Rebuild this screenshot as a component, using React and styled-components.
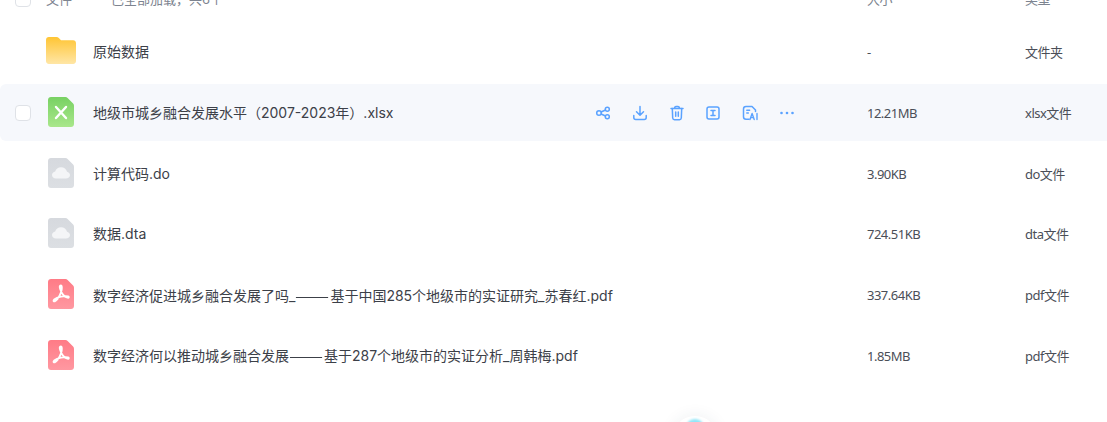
import React from 'react';
import styled, { createGlobalStyle } from 'styled-components';

const GlobalStyle = createGlobalStyle`
  html, body {
    margin: 0;
    padding: 0;
    height: 100%;
    overflow: hidden;
    background: #fff;
  }
  body {
    font-family: Inter, "Noto Sans CJK SC", sans-serif;
    color: #3c4048;
  }
`;

const Page = styled.div`
  position: relative;
  height: 422px;
  overflow: hidden;
`;

const List = styled.div`
  display: flex;
  flex-direction: column;
  gap: 3.8px;
  margin-top: -17.4px;
`;

const Row = styled.div`
  display: grid;
  grid-template-columns: 31px 47px 1fr 158px 82px;
  align-items: center;
  height: 57px;
  padding-left: 15px;
  background: ${(p) => (p.$active ? '#f6f8fc' : 'transparent')};
  border-radius: 6px 0 0 6px;
`;

const HeaderRow = styled(Row)`
  height: 32px;
  margin-bottom: 5px;
  font-size: 13px;
  color: #7d8490;
`;

const Check = styled.span`
  display: block;
  width: 16px;
  height: 16px;
  box-sizing: border-box;
  background: #fff;
  border: 1.5px solid #dfe2e7;
  border-radius: 4px;
`;

const IconCell = styled.div`
  display: flex;
  align-items: center;
  margin-left: ${(p) => p.$offset}px;
  margin-bottom: 2px;
`;

const NameCell = styled.div`
  display: flex;
  align-items: center;
  min-width: 0;
  font-size: 14px;
  line-height: 20px;
`;

const Name = styled.span`
  flex: 1;
  white-space: nowrap;
`;

const Dash = styled.span`
  display: inline-block;
  width: 35px;
  font-family: "Noto Sans CJK SC", sans-serif;
  transform: scaleX(1.45);
  transform-origin: left center;
`;

const HeaderTitle = styled.div`
  display: flex;
  align-items: center;
  grid-column: 2 / 4;
`;

const SortMark = styled.span`
  width: 4px;
  height: 1px;
  margin: 0 24px 0 11px;
  background: #b9bdc5;
`;

const Actions = styled.div`
  display: flex;
  align-items: center;
  gap: 18.8px;
  margin-right: 71px;
  color: #5aa2ff;
`;

const Meta = styled.div`
  font-family: "Noto Sans", "Noto Sans CJK SC", sans-serif;
  font-size: 13px;
  line-height: 20px;
  letter-spacing: -0.5px;
  white-space: nowrap;
  color: ${(p) => (p.$muted ? '#7d8490' : '#4a4e57')};
`;

const FloatButton = styled.div`
  position: absolute;
  left: 672px;
  top: 416px;
  width: 46px;
  height: 46px;
  border-radius: 50%;
  background: #fff;
  box-shadow: 0 0 16px rgba(40, 60, 90, 0.08);

  &::after {
    content: '';
    position: absolute;
    left: 15px;
    top: 3px;
    width: 16px;
    height: 12px;
    border-radius: 50%;
    background: #8fe6f8;
    filter: blur(1px);
  }
`;

const FolderIcon = () => (
  <svg width="30" height="27" viewBox="0 0 32 28" preserveAspectRatio="none">
    <defs>
      <linearGradient id="folderFill" x1="0" y1="0" x2="0" y2="1">
        <stop offset="0" stopColor="#ffc534" />
        <stop offset="1" stopColor="#ffe6a6" />
      </linearGradient>
    </defs>
    <path
      d="M3 0h8.200c1 0 1.800.4 2.500 1.100L16 3.400h13c1.700 0 3 1.300 3 3V25c0 1.700-1.300 3-3 3H3c-1.700 0-3-1.300-3-3V3c0-1.700 1.300-3 3-3z"
      fill="url(#folderFill)"
    />
  </svg>
);

const FileShape = ({ from, to, id, children }) => (
  <svg width="26" height="30" viewBox="0 0 26 30">
    <defs>
      <linearGradient id={id} x1="0" y1="0" x2="0" y2="1">
        <stop offset="0" stopColor={from} />
        <stop offset="1" stopColor={to} />
      </linearGradient>
    </defs>
    <path
      d="M3 0h14.500c.8 0 1.500.3 2.100.9l5.500 5.700c.6.6.9 1.300.9 2.100V27c0 1.700-1.300 3-3 3H3c-1.700 0-3-1.300-3-3V3c0-1.700 1.300-3 3-3z"
      fill={`url(#${id})`}
    />
    {children}
  </svg>
);

const ExcelIcon = () => (
  <FileShape id="xlsFill" from="#78d163" to="#a9e78b">
    <path d="M8 10l10 11M18 10L8 21" stroke="#fff" strokeWidth="2.400" strokeLinecap="round" fill="none" />
  </FileShape>
);

const CloudIcon = ({ id }) => (
  <FileShape id={id} from="#d6d9de" to="#dcdfe3">
    <path
      d="M8 20.500c-2.200 0-4-1.500-4-3.500 0-1.800 1.400-3.200 3.200-3.500C7.800 11 10.200 9.300 13 9.300c3 0 5.500 1.900 6 4.400 1.700.3 3 1.700 3 3.300 0 2-1.800 3.500-4 3.500H8z"
      fill="#f4f5f7"
    />
  </FileShape>
);

const PdfIcon = ({ id }) => (
  <FileShape id={id} from="#ff7b86" to="#ff98a1">
    <path
      d="M12.800 6.500c1.300 0 1.300 3.500.2 6.800-1.500 4.200-4 8-6.300 9-1.300.5-1.600-.9-.4-1.900 3-2.400 10.200-4 13.700-3 1.300.4.800 1.700-.5 1.300-3.500-1-6.200-5-7.300-8.700-.7-2.300-.6-3.500.6-3.500z"
      fill="none"
      stroke="#fff"
      strokeWidth="1.900"
      strokeLinejoin="round"
    />
  </FileShape>
);

const Glyph = ({ children }) => (
  <svg width="18" height="18" viewBox="0 0 18 18" fill="none" stroke="currentColor" strokeWidth="1.500" strokeLinecap="round" strokeLinejoin="round">
    {children}
  </svg>
);

const ShareIcon = () => (
  <Glyph>
    <circle cx="5" cy="9" r="2.300" />
    <circle cx="13.300" cy="5.200" r="2" />
    <circle cx="13.300" cy="12.800" r="2" />
    <path d="M7.100 8l4.400-2M7.100 10l4.400 2" />
  </Glyph>
);

const DownloadIcon = () => (
  <Glyph>
    <path d="M9 2.500v8.500M5.500 7.800L9 11.200l3.500-3.400" />
    <path d="M2.800 11.500v2c0 1.200.9 2 2 2h8.400c1.100 0 2-.8 2-2v-2" />
  </Glyph>
);

const TrashIcon = () => (
  <Glyph>
    <path d="M3 4.500h12M6.500 4.300c0-1.200.7-1.900 1.700-1.900h1.600c1 0 1.700.7 1.700 1.900" />
    <path d="M4.300 4.500l.4 9.500c.1 1 .9 1.700 1.800 1.700h5c.9 0 1.700-.7 1.800-1.700l.4-9.500" />
    <path d="M7.700 8v4.200M10.300 8v4.200" />
  </Glyph>
);

const RenameIcon = () => (
  <Glyph>
    <rect x="3" y="3" width="12" height="12" rx="2" />
    <path d="M7 6.500h4M7 11.500h4M9 6.500v5" />
  </Glyph>
);

const AiIcon = () => (
  <Glyph>
    <path d="M8 15.200H5c-1.400 0-2.500-1.100-2.500-2.500V5c0-1.400 1.100-2.500 2.500-2.500h6l3.500 3.500v1.500" />
    <path d="M5.800 6.300h2.800M5.800 9h1.500" />
    <path d="M9 15.500l2.100-6 2.100 6M9.800 13.600h2.600M16 9.500v6" strokeWidth="1.400" />
  </Glyph>
);

const MoreIcon = () => (
  <svg width="18" height="18" viewBox="0 0 18 18" fill="currentColor">
    <circle cx="3.500" cy="9" r="1.300" />
    <circle cx="9" cy="9" r="1.300" />
    <circle cx="14.500" cy="9" r="1.300" />
  </svg>
);

const files = [
  { name: '原始数据', size: '-', type: '文件夹', kind: 'folder' },
  { name: '地级市城乡融合发展水平（2007-2023年）.xlsx', size: '12.21MB', type: 'xlsx文件', kind: 'xlsx', active: true },
  { name: '计算代码.do', size: '3.90KB', type: 'do文件', kind: 'cloud' },
  { name: '数据.dta', size: '724.51KB', type: 'dta文件', kind: 'cloud' },
  { name: '数字经济促进城乡融合发展了吗_——基于中国285个地级市的实证研究_苏春红.pdf', size: '337.64KB', type: 'pdf文件', kind: 'pdf' },
  { name: '数字经济何以推动城乡融合发展——基于287个地级市的实证分析_周韩梅.pdf', size: '1.85MB', type: 'pdf文件', kind: 'pdf' },
];

const renderIcon = (kind, index) => {
  if (kind === 'folder') return <FolderIcon />;
  if (kind === 'xlsx') return <ExcelIcon />;
  if (kind === 'cloud') return <CloudIcon id={`cloud${index}`} />;
  return <PdfIcon id={`pdf${index}`} />;
};

// the dashes come from the CJK font, stretched to the reference width
const renderName = (name) => {
  const parts = name.split('——');
  if (parts.length < 2) return name;
  return (
    <>
      {parts[0]}
      <Dash>——</Dash>
      {parts[1]}
    </>
  );
};

const App = () => (
  <Page>
    <GlobalStyle />
    <List>
      <HeaderRow>
        <Check />
        <HeaderTitle>
          <span>文件</span>
          <SortMark />
          <span>已全部加载，共6个</span>
        </HeaderTitle>
        <Meta $muted>大小</Meta>
        <Meta $muted>类型</Meta>
      </HeaderRow>
      {files.map((file, i) => (
        <Row key={file.name} $active={file.active}>
          {file.active ? <Check /> : <span />}
          <IconCell $offset={file.kind === 'folder' ? 0 : 2}>{renderIcon(file.kind, i)}</IconCell>
          <NameCell>
            <Name>{renderName(file.name)}</Name>
            {file.active && (
              <Actions>
                <ShareIcon />
                <DownloadIcon />
                <TrashIcon />
                <RenameIcon />
                <AiIcon />
                <MoreIcon />
              </Actions>
            )}
          </NameCell>
          <Meta>{file.size}</Meta>
          <Meta>{file.type}</Meta>
        </Row>
      ))}
    </List>
    <FloatButton />
  </Page>
);

export default App;
